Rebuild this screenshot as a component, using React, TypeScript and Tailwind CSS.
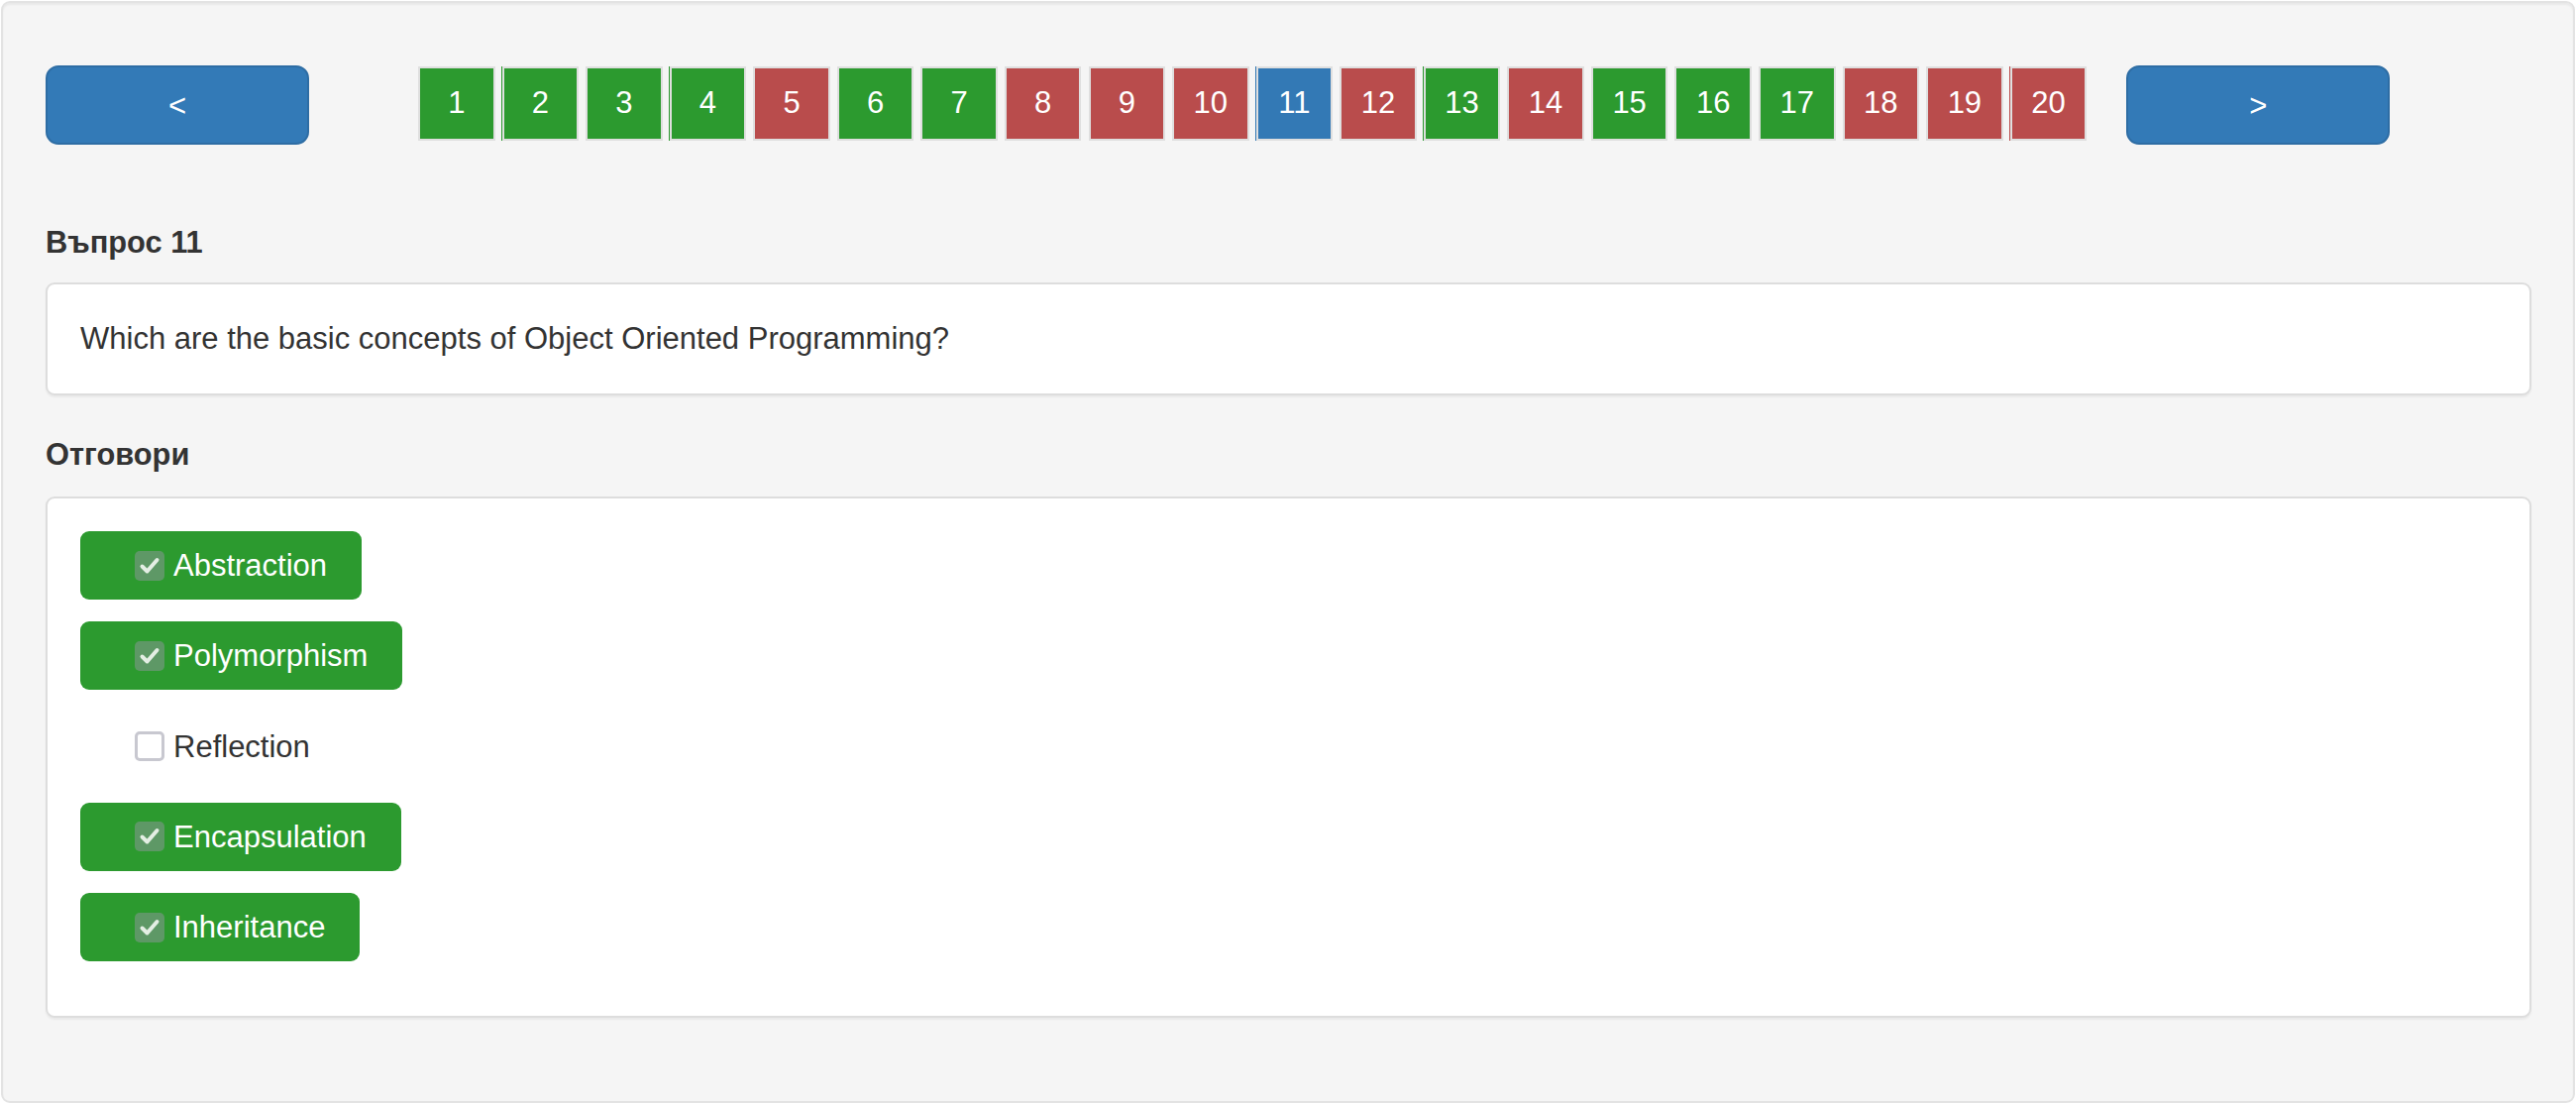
type Status = 'ok' | 'bad' | 'current'

const questions: { n: number; status: Status; edge?: boolean }[] = [
  { n: 1, status: 'ok' },
  { n: 2, status: 'ok', edge: true },
  { n: 3, status: 'ok' },
  { n: 4, status: 'ok', edge: true },
  { n: 5, status: 'bad' },
  { n: 6, status: 'ok' },
  { n: 7, status: 'ok' },
  { n: 8, status: 'bad' },
  { n: 9, status: 'bad' },
  { n: 10, status: 'bad' },
  { n: 11, status: 'current', edge: true },
  { n: 12, status: 'bad' },
  { n: 13, status: 'ok', edge: true },
  { n: 14, status: 'bad' },
  { n: 15, status: 'ok' },
  { n: 16, status: 'ok' },
  { n: 17, status: 'ok' },
  { n: 18, status: 'bad' },
  { n: 19, status: 'bad' },
  { n: 20, status: 'bad', edge: true },
]

const answers = [
  { text: 'Abstraction', checked: true },
  { text: 'Polymorphism', checked: true },
  { text: 'Reflection', checked: false },
  { text: 'Encapsulation', checked: true },
  { text: 'Inheritance', checked: true },
]

const boxColor: Record<Status, string> = {
  ok: 'bg-[#2c9a2f]',
  bad: 'bg-[#b94c4c]',
  current: 'bg-[#3379b5]',
}

const edgeColor: Record<Status, string> = {
  ok: 'shadow-[-1px_0_0_#2c9a2f]',
  bad: 'shadow-[-1px_0_0_#b94c4c]',
  current: 'shadow-[-1px_0_0_#3379b5]',
}

function NavButton({ label }: { label: string }) {
  return (
    <button className="w-[266px] h-[80px] shrink-0 rounded-[13px] border-2 border-[#2e6da4] bg-[#337ab7] text-white text-[31px] leading-none">
      {label}
    </button>
  )
}

function Checkbox({ checked }: { checked: boolean }) {
  if (checked) {
    return (
      <span className="w-[30px] h-[30px] rounded-[5px] bg-[#5e9866] flex items-center justify-center shrink-0">
        <svg width="24" height="24" viewBox="0 0 24 24" fill="none">
          <path d="M4.5 12.5 L9.5 17.5 L19.5 6" stroke="#e4eee4" strokeWidth="4" strokeLinecap="round" strokeLinejoin="round" />
        </svg>
      </span>
    )
  }
  return <span className="w-[30px] h-[30px] rounded-[5px] border-[3px] border-[#c8c8d0] bg-white shrink-0" />
}

export default function App() {
  return (
    <div className="w-[2600px] h-[1114px] bg-white p-[1px] font-['Liberation_Sans',Arial,sans-serif] text-[#333333]">
      <div className="h-full rounded-[9px] border-2 border-[#e3e3e3] bg-[#f5f5f5] shadow-[inset_0_2px_2px_rgba(0,0,0,0.05)] pt-[63px] pl-[43px] pr-[42px]">
        <div className="flex items-start">
          <NavButton label="<" />
          <div className="ml-[110px] mt-[1px] flex gap-[7.07px]">
            {questions.map((q) => (
              <div
                key={q.n}
                className={`w-[77.5px] h-[75px] border-2 border-[#dfdfdf] ${q.edge ? edgeColor[q.status] : ''}`}
              >
                <div className={`h-full flex items-center justify-center text-white text-[31px] ${boxColor[q.status]}`}>
                  {q.n}
                </div>
              </div>
            ))}
          </div>
          <div className="ml-[40px]">
            <NavButton label=">" />
          </div>
        </div>

        <div className="mt-[77px] font-bold text-[30.8px] leading-[44px]">Въпрос 11</div>
        <div className="mt-[18px] rounded-[9px] border-2 border-[#dddddd] bg-white p-[33px] shadow-[0_2px_2px_rgba(0,0,0,0.05)]">
          <p className="text-[31px] leading-[44px]">Which are the basic concepts of Object Oriented Programming?</p>
        </div>

        <div className="mt-[38px] font-bold text-[30.8px] leading-[44px]">Отговори</div>
        <div className="mt-[20px] rounded-[9px] border-2 border-[#dddddd] bg-white px-[33px] pt-[33px] pb-[33px] shadow-[0_2px_2px_rgba(0,0,0,0.05)]">
          {answers.map((a) => (
            <div key={a.text} className="mb-[22.3px]">
              <div
                className={`inline-flex items-center h-[69px] rounded-[9px] pl-[55px] pr-[35px] ${
                  a.checked ? 'bg-[#2c9a2f] text-white' : 'text-[#333333]'
                }`}
              >
                <Checkbox checked={a.checked} />
                <span className="ml-[9px] text-[31px] leading-none">{a.text}</span>
              </div>
            </div>
          ))}
        </div>
      </div>
    </div>
  )
}
